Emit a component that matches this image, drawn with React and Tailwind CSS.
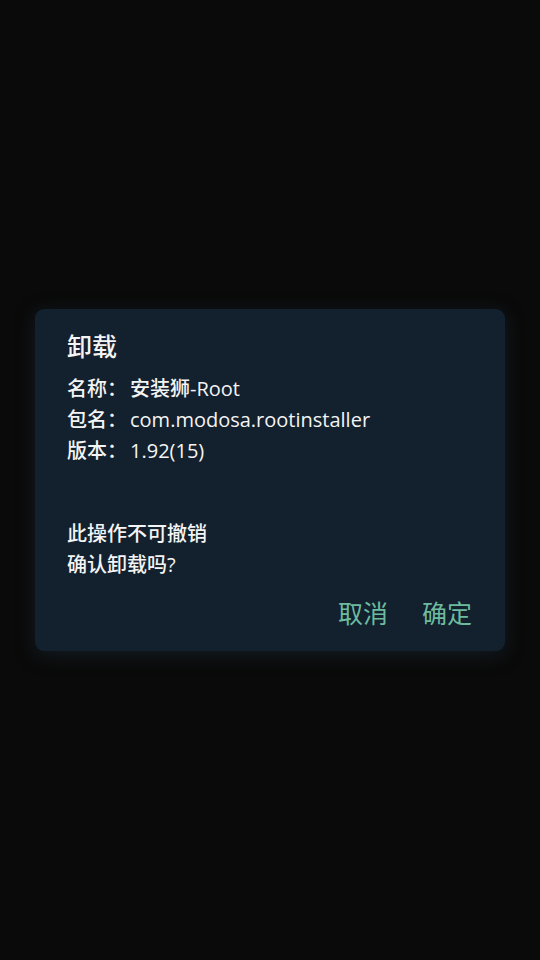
const info = [
    { label: "名称：", value: "安装狮-Root" },
    { label: "包名：", value: "com.modosa.rootinstaller" },
    { label: "版本：", value: "1.92(15)" },
];

const App = () => {
    return (
        <section
            className="h-[960px] w-[540px] overflow-hidden bg-[#0a0a0a] pt-[309px] px-[35px]"
            style={{ fontFamily: '"Open Sans", "Noto Sans CJK SC", sans-serif' }}
        >
            <div className="rounded-[9px] bg-[#13202e] pt-[22px] pb-[23px] px-[32px] text-[#f4f4f4] shadow-[0_4px_18px_rgba(30,45,60,0.5)]">
                <h1 className="text-[25px] leading-[30px] font-medium">卸载</h1>
                <div className="mt-[12px] text-[20px] leading-[31px] font-medium">
                    {info.map((row) => (
                        <p key={row.label} className="whitespace-nowrap">
                            {row.label}
                            <span className="ml-[3px]">{row.value}</span>
                        </p>
                    ))}
                </div>
                <div className="mt-[52px] text-[20px] leading-[31px] font-medium">
                    <p>此操作不可撤销</p>
                    <p>确认卸载吗?</p>
                </div>
                <div className="mt-[18px] flex justify-end gap-[34px] pr-[1px] text-[25px] leading-[30px] text-[#6dbb9f]">
                    <button>取消</button>
                    <button>确定</button>
                </div>
            </div>
        </section>
    );
};

export default App;
